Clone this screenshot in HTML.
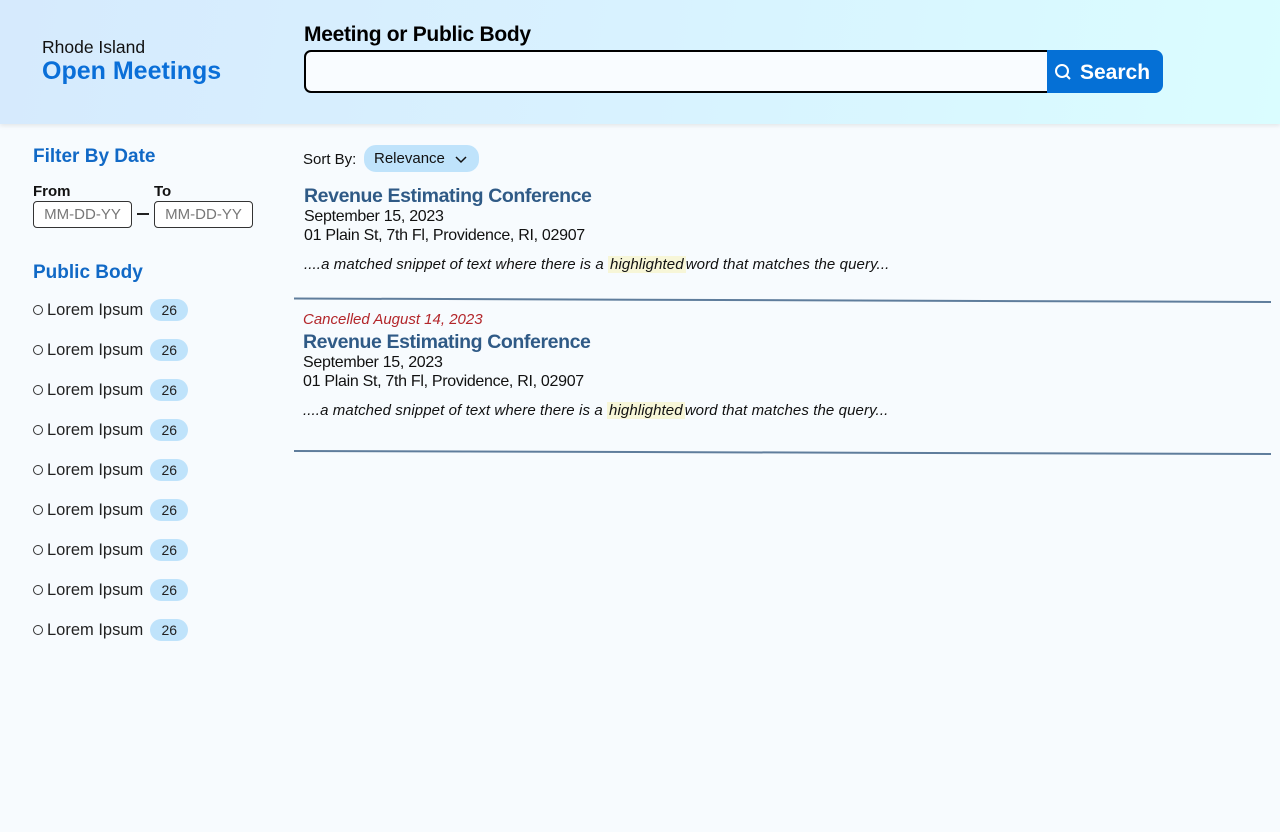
<!DOCTYPE html>
<html><head><meta charset="utf-8"><style>
*{margin:0;padding:0;box-sizing:border-box}
body{width:1280px;height:832px;background:#f7fbfe;font-family:"Liberation Sans",sans-serif;position:relative;overflow:hidden;color:#111}
.hdr{position:absolute;left:0;top:0;width:1280px;height:124px;background:linear-gradient(100deg,#d6eafd 0%,#d8f2ff 50%,#dafdff 100%);box-shadow:0 2px 4px rgba(0,0,0,.08)}
.abs{position:absolute;white-space:nowrap}
.blue{color:#1169c6;font-weight:bold}
.inp{position:absolute;border:1px solid #333;border-radius:4px;background:#fff;color:#777;font-size:15px;text-align:center;line-height:25px}
.item{position:absolute;left:33px;font-size:16.5px;color:#222;display:flex;align-items:center}
.dot{width:10px;height:10px;border:1.5px solid #333;border-radius:50%;margin-right:4px}
.badge{background:#bfe3fb;border-radius:11px;width:38px;height:22px;line-height:22px;text-align:center;font-size:14px;margin-left:7px}
.title{color:#2f5a86;font-weight:bold;font-size:19.5px;letter-spacing:-0.4px}
.t16{font-size:16px;letter-spacing:-0.3px}
.snip{font-size:15px;font-style:italic;letter-spacing:0.1px}
.hl{background:#f7f6d8;padding:0 2px}
</style></head><body>
<div class="hdr"></div>
<div class="abs" style="left:42px;top:37px;font-size:17.5px;color:#111">Rhode Island</div>
<div class="abs blue" style="left:42px;top:57px;font-size:25px;color:#0a6fd8">Open Meetings</div>
<div class="abs" style="left:304px;top:23px;font-size:21px;font-weight:bold;color:#000;letter-spacing:-0.3px">Meeting or Public Body</div>
<div class="abs" style="left:304px;top:50px;width:745px;height:43px;border:2.5px solid #000;border-radius:7px 0 0 7px;background:#f9fcff"></div>
<div class="abs" style="left:1047px;top:50px;width:116px;height:43px;background:#0570d6;border-radius:0 8px 8px 0;color:#fff;font-weight:bold;font-size:21px;line-height:45px;padding-left:33px">Search</div>
<svg class="abs" style="left:1053px;top:62px" width="20" height="20" viewBox="0 0 20 20"><circle cx="9" cy="9" r="6" fill="none" stroke="#fff" stroke-width="2"/><path d="M13 13l4 4" stroke="#fff" stroke-width="2"/></svg>

<div class="abs blue" style="left:33px;top:146px;font-size:19px">Filter By Date</div>
<div class="abs" style="left:33px;top:183px;font-size:15px;font-weight:bold">From</div>
<div class="abs" style="left:154px;top:183px;font-size:15px;font-weight:bold">To</div>
<div class="inp" style="left:33px;top:201px;width:99px;height:27px">MM-DD-YY</div>
<div class="abs" style="left:137px;top:213px;width:12px;height:2px;background:#222"></div>
<div class="inp" style="left:154px;top:201px;width:99px;height:27px">MM-DD-YY</div>
<div class="abs blue" style="left:33px;top:262px;font-size:19px">Public Body</div>

<div class="item" style="top:299px"><span class="dot"></span>Lorem Ipsum<span class="badge">26</span></div>
<div class="item" style="top:339px"><span class="dot"></span>Lorem Ipsum<span class="badge">26</span></div>
<div class="item" style="top:379px"><span class="dot"></span>Lorem Ipsum<span class="badge">26</span></div>
<div class="item" style="top:419px"><span class="dot"></span>Lorem Ipsum<span class="badge">26</span></div>
<div class="item" style="top:459px"><span class="dot"></span>Lorem Ipsum<span class="badge">26</span></div>
<div class="item" style="top:499px"><span class="dot"></span>Lorem Ipsum<span class="badge">26</span></div>
<div class="item" style="top:539px"><span class="dot"></span>Lorem Ipsum<span class="badge">26</span></div>
<div class="item" style="top:579px"><span class="dot"></span>Lorem Ipsum<span class="badge">26</span></div>
<div class="item" style="top:619px"><span class="dot"></span>Lorem Ipsum<span class="badge">26</span></div>

<div class="abs" style="left:303px;top:151px;font-size:15px">Sort By:</div>
<div class="abs" style="left:364px;top:145px;width:115px;height:27px;background:#bfe3fb;border-radius:12px;font-size:15px;line-height:27px;padding-left:10px">Relevance</div>
<svg class="abs" style="left:455px;top:155px" width="12" height="10"><path d="M1 2l5 5 5-5" fill="none" stroke="#111" stroke-width="1.5"/></svg>

<div class="abs title" style="left:304px;top:185px">Revenue Estimating Conference</div>
<div class="abs t16" style="left:304px;top:208px">September 15, 2023</div>
<div class="abs t16" style="left:304px;top:227px">01 Plain St, 7th Fl, Providence, RI, 02907</div>
<div class="abs snip" style="left:304px;top:256px">....a matched snippet of text where there is a <span class="hl">highlighted</span>word that matches the query...</div>

<svg class="abs" style="left:0;top:0" width="1280" height="832"><line x1="294" y1="298.5" x2="1271" y2="302" stroke="#5f7d9c" stroke-width="2"/><line x1="294" y1="451" x2="1271" y2="454" stroke="#5f7d9c" stroke-width="2"/></svg>

<div class="abs" style="left:303px;top:311px;font-size:15px;font-style:italic;color:#b3262a">Cancelled August 14, 2023</div>
<div class="abs title" style="left:303px;top:331px">Revenue Estimating Conference</div>
<div class="abs t16" style="left:303px;top:354px">September 15, 2023</div>
<div class="abs t16" style="left:303px;top:373px">01 Plain St, 7th Fl, Providence, RI, 02907</div>
<div class="abs snip" style="left:303px;top:402px">....a matched snippet of text where there is a <span class="hl">highlighted</span>word that matches the query...</div>
</body></html>
